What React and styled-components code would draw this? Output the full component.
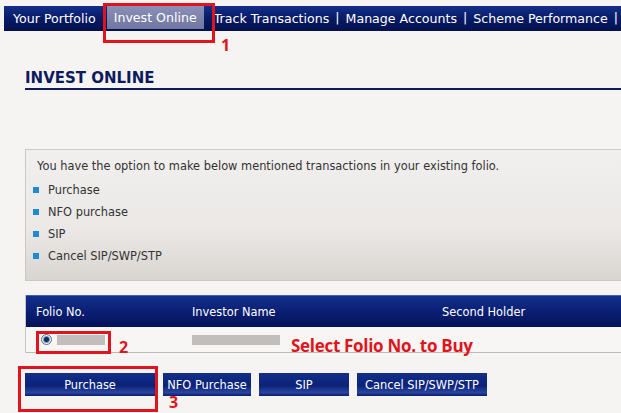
import React from "react";
import styled, { createGlobalStyle } from "styled-components";

const GlobalStyle = createGlobalStyle`
  html, body {
    margin: 0;
    padding: 0;
    background: #f5f4f2;
    width: 621px;
    height: 413px;
    overflow: hidden;
  }
  body {
    font-family: "DejaVu Sans", Verdana, sans-serif;
  }
`;

const navItems = [
  { label: "Your Portfolio" },
  { label: "Invest Online", active: true },
  { label: "Track Transactions", sep: true },
  { label: "Manage Accounts", sep: true },
  { label: "Scheme Performance", sep: true },
];

const options = ["Purchase", "NFO purchase", "SIP", "Cancel SIP/SWP/STP"];

const buttons = [
  { label: "Purchase", width: 130 },
  { label: "NFO Purchase", width: 88 },
  { label: "SIP", width: 90 },
  { label: "Cancel SIP/SWP/STP", width: 130 },
];

const Page = styled.div`
  position: relative;
  width: 621px;
  height: 413px;
  padding-top: 6px;
  box-sizing: border-box;
`;

const NavBar = styled.div`
  display: flex;
  align-items: stretch;
  height: 25px;
  margin-left: 4px;
  background: linear-gradient(#14308a, #071a66 50%, #02104c);
  white-space: nowrap;
`;

const NavItem = styled.div`
  display: flex;
  align-items: center;
  padding: ${(p) => (p.$active ? "0 7px" : "0 6px")};
  margin: ${(p) => (p.$active ? "0 4px 2px 5px" : "0")};
  font-size: 12.6px;
  color: #ffffff;
  background: ${(p) => (p.$active ? "linear-gradient(#8c90b8, #70769f)" : "none")};
  &:first-child {
    padding-left: 9px;
  }
`;

const NavSep = styled.span`
  color: #ffffff;
  font-size: 12.6px;
  display: flex;
  align-items: center;
  padding-bottom: 2px;
`;

const Content = styled.div`
  padding-left: 25px;
`;

const Heading = styled.h2`
  margin: 39px 0 0 0;
  padding-bottom: 2px;
  font-size: 15px;
  font-weight: bold;
  color: #0d1a5e;
  border-bottom: 2px solid #0d1a5e;
  line-height: 16px;
`;

const InfoBox = styled.div`
  margin-top: 59px;
  height: 132px;
  box-sizing: border-box;
  border: 1px solid #cbc7c3;
  border-right: none;
  background: linear-gradient(#f1f0ef, #ebe8e6 60%, #d9d5d1);
  padding: 8px 0 0 11px;
  color: #333;
  font-size: 11.4px;
`;

const InfoText = styled.div`
  line-height: 16px;
  margin-bottom: 5px;
`;

const OptionList = styled.ul`
  list-style: none;
  margin: 0 0 0 -4px;
  padding: 0;
`;

const OptionItem = styled.li`
  display: flex;
  align-items: center;
  height: 22px;
  &::before {
    content: "";
    width: 6px;
    height: 6px;
    background: #1d8ad2;
    margin-right: 9px;
  }
`;

const Table = styled.div`
  margin-top: 14px;
  border-left: 1px solid #c8c4c0;
`;

const HeaderRow = styled.div`
  display: grid;
  grid-template-columns: 156px 250px 1fr;
  height: 31px;
  align-items: center;
  padding-left: 10px;
  border-top: 1px solid #4062b8;
  background: linear-gradient(#13308c, #0a1f74 50%, #041258);
  color: #fff;
  font-size: 11.4px;
`;

const DataRow = styled.div`
  display: grid;
  grid-template-columns: 151px 1fr;
  height: 25px;
  align-items: center;
  padding-left: 15px;
  border-bottom: 1px solid #bdb9b5;
  background: #f7f6f4;
`;

const Cell = styled.div`
  display: flex;
  align-items: center;
`;

const Radio = styled.span`
  width: 9px;
  height: 9px;
  border-radius: 50%;
  border: 1px solid #6e6e6e;
  background: radial-gradient(circle, #0f2e5a 0 2px, #6a9ad2 3px, #e8eef6 4px);
  margin-right: 5px;
`;

const Masked = styled.span`
  display: inline-block;
  width: ${(p) => p.$w}px;
  height: 10px;
  background: #c2bebb;
`;

const Callout = styled.span`
  position: absolute;
  left: 291px;
  top: 334px;
  color: #e0141c;
  font-family: "Open Sans", sans-serif;
  font-weight: bold;
  font-size: 17px;
  letter-spacing: -0.3px;
`;

const ButtonRow = styled.div`
  display: flex;
  gap: 8px;
  margin-top: 20px;
`;

const Button = styled.button`
  width: ${(p) => p.$w}px;
  height: 23px;
  border: none;
  padding: 0;
  color: #fff;
  font-family: inherit;
  font-size: 11.4px;
  white-space: nowrap;
  background: linear-gradient(#122f8a, #0b2278 55%, #2a45a0 85%, #0a1c6a);
`;

const Mark = styled.div`
  position: absolute;
  border: 3px solid #e0141c;
  box-sizing: border-box;
`;

const MarkNumber = styled.span`
  position: absolute;
  color: #e0141c;
  font-family: "Open Sans", sans-serif;
  font-weight: bold;
  font-size: 16px;
  line-height: 1;
`;

export default function App() {
  return (
    <Page>
      <GlobalStyle />
      <NavBar>
        {navItems.map((item) => (
          <React.Fragment key={item.label}>
            <NavItem $active={item.active}>{item.label}</NavItem>
            {item.sep && <NavSep>|</NavSep>}
          </React.Fragment>
        ))}
      </NavBar>
      <Content>
        <Heading>INVEST ONLINE</Heading>
        <InfoBox>
          <InfoText>
            You have the option to make below mentioned transactions in your existing folio.
          </InfoText>
          <OptionList>
            {options.map((o) => (
              <OptionItem key={o}>{o}</OptionItem>
            ))}
          </OptionList>
        </InfoBox>
        <Table>
          <HeaderRow>
            <span>Folio No.</span>
            <span>Investor Name</span>
            <span>Second Holder</span>
          </HeaderRow>
          <DataRow>
            <Cell>
              <Radio />
              <Masked $w={48} />
            </Cell>
            <Cell>
              <Masked $w={88} />
            </Cell>
          </DataRow>
        </Table>
        <ButtonRow>
          {buttons.map((b) => (
            <Button key={b.label} $w={b.width}>
              {b.label}
            </Button>
          ))}
        </ButtonRow>
      </Content>
      <Callout>Select Folio No. to Buy</Callout>
      <Mark style={{ left: 103, top: 3, width: 112, height: 40 }} />
      <MarkNumber style={{ left: 221, top: 37 }}>1</MarkNumber>
      <Mark style={{ left: 36, top: 331, width: 75, height: 23 }} />
      <MarkNumber style={{ left: 119, top: 339 }}>2</MarkNumber>
      <Mark style={{ left: 18, top: 366, width: 140, height: 46 }} />
      <MarkNumber style={{ left: 169, top: 394 }}>3</MarkNumber>
    </Page>
  );
}
